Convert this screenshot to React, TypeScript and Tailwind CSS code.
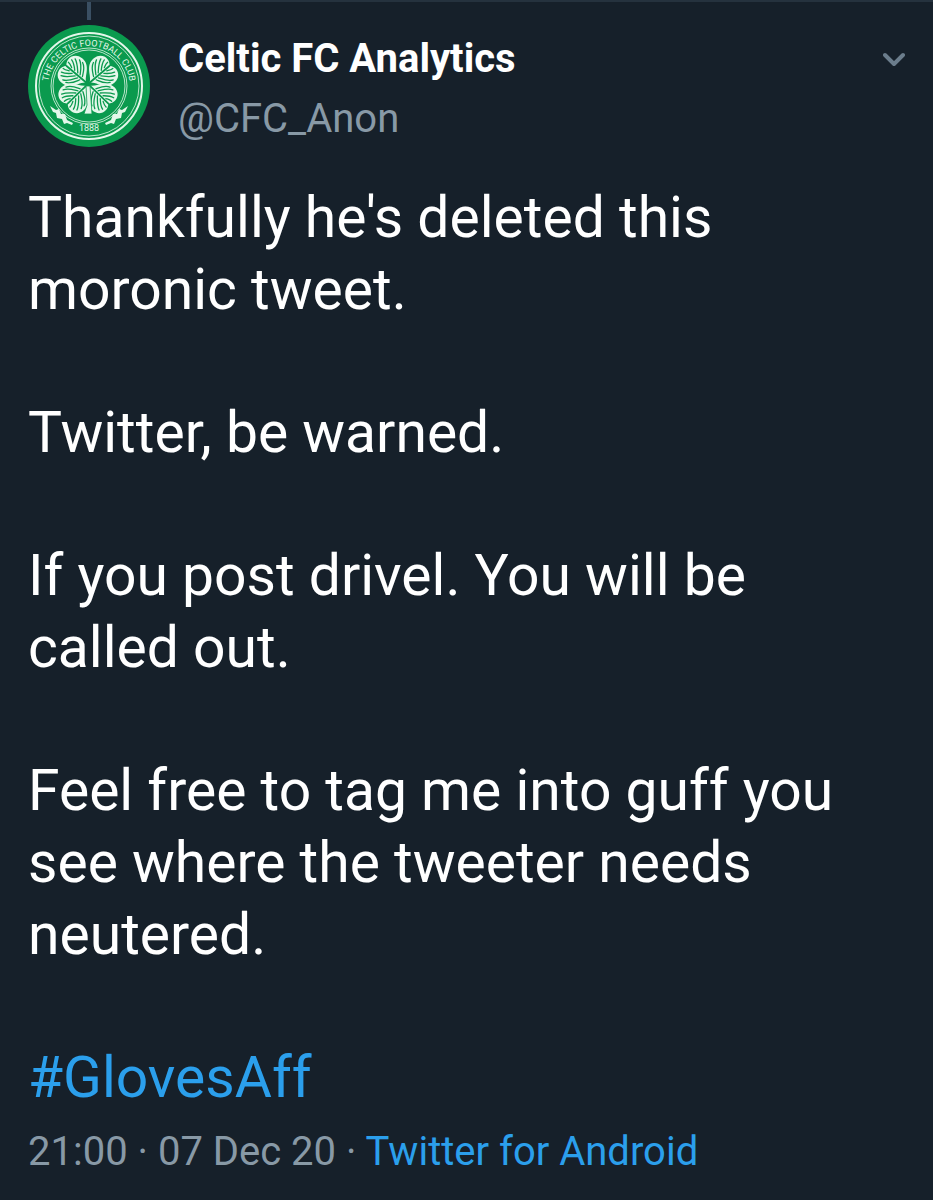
import React from 'react';
import { twMerge } from 'tailwind-merge';

const HEART = 'M0 -2 C-3 -8 -16 -9 -16 -21 C-16 -31 -5 -34 0 -28 C5 -34 16 -31 16 -21 C16 -9 3 -8 0 -2 Z';

const Leaf = ({ angle }: { angle: number }) => (
  <g transform={`translate(60 59) rotate(${angle})`}>
    <path d={HEART} fill="#e4f7ea" />
    <g fill="none" stroke="#0a9a4e" strokeLinecap="round">
      <path d="M0 -2 V-28" strokeWidth="1.8" />
      <path
        d="M-2 -9 C-6 -11 -11 -13 -13 -18 M-2 -12 C-5 -14 -11 -17 -13 -22 M-2 -15 C-5 -18 -9 -21 -11 -26 M-2 -19 C-4 -21 -7 -24 -8 -28 M-2 -23 C-3 -25 -4 -26 -4 -29 M2 -9 C6 -11 11 -13 13 -18 M2 -12 C5 -14 11 -17 13 -22 M2 -15 C5 -18 9 -21 11 -26 M2 -19 C4 -21 7 -24 8 -28 M2 -23 C3 -25 4 -26 4 -29"
        strokeWidth="1.3"
      />
    </g>
  </g>
);

const Scroll = ({ flip = false }: { flip?: boolean }) => (
  <path
    transform={flip ? 'matrix(-1 0 0 1 122 0)' : undefined}
    d="M22 81 L28 85 L31 84 L33 89 L37 89 L39 95 L45 98 L44 100 L39 98 L36 99 L34 94 L29 93 L28 88 L25 87 Z"
    fill="#e4f7ea"
  />
);

const Crest = () => (
  <svg viewBox="0 0 122 122" className="size-full" role="img" aria-label="Celtic FC Analytics">
    <defs>
      <path id="crest-arc" d="M20 62 A41 41 0 0 1 102 62" />
    </defs>
    <circle cx="61" cy="61" r="61" fill="#0a9a4e" />
    <g fill="none" stroke="#e4f7ea">
      <circle cx="61" cy="61" r="53" strokeWidth="2" />
      <circle cx="61" cy="61" r="50" strokeWidth="0.8" />
      <circle cx="61" cy="61" r="38" strokeWidth="0.8" />
      <circle cx="61" cy="61" r="36" strokeWidth="0.8" />
    </g>
    <text className="font-['Roboto',sans-serif] text-[9px]" fill="#e4f7ea">
      <textPath href="#crest-arc" startOffset="50%" textAnchor="middle">
        THE CELTIC FOOTBALL CLUB
      </textPath>
    </text>
    <text x="61" y="106" textAnchor="middle" className="font-['Roboto',sans-serif] text-[9px]" fill="#e4f7ea">
      1888
    </text>
    <Scroll />
    <Scroll flip />
    <Leaf angle={-50} />
    <Leaf angle={50} />
    <Leaf angle={134} />
    <Leaf angle={-134} />
    {/* Stem */}
    <path d="M58 61 H62 L64 89 H56 L59 80 Z" fill="#e4f7ea" stroke="#0a9a4e" strokeWidth="0.8" />
  </svg>
);

interface TweetTextProps {
  children: React.ReactNode;
  className?: string;
}

const TweetText: React.FC<TweetTextProps> = ({ children, className }) => (
  <p className={twMerge('text-[57px] leading-[72px]', className)}>{children}</p>
);

export default function App() {
  return (
    <article className="min-h-screen border-t-2 border-[#25323e] bg-[#16202a] px-7 pb-6 font-['Roboto',sans-serif] text-white">
      {/* Thread line */}
      <div className="flex h-[23px] w-[122px] justify-center">
        <div className="h-[18px] w-1 bg-[#3a4f63]" />
      </div>

      {/* Author */}
      <header className="flex items-start gap-7">
        <div className="size-[122px] shrink-0">
          <Crest />
        </div>
        <div className="min-w-0 flex-1 pt-1">
          <h1 className="text-[40px] leading-[60px] font-bold">Celtic FC Analytics</h1>
          <a href="#" className="block text-[40px] leading-[60px] text-[#8899a6]">
            @CFC_Anon
          </a>
        </div>
        <button type="button" aria-label="More options" className="mt-6 shrink-0">
          <svg viewBox="0 0 22 22" className="size-[22px]" fill="none" stroke="#6b7d8c" strokeWidth="4" strokeLinecap="round" strokeLinejoin="round">
            <path d="M2 6 L11 15 L20 6" />
          </svg>
        </button>
      </header>

      {/* Body */}
      <div className="flex flex-col gap-[71px] pt-[33px]">
        <TweetText>Thankfully he's deleted this moronic tweet.</TweetText>
        <TweetText>Twitter, be warned.</TweetText>
        <TweetText>If you post drivel. You will be called out.</TweetText>
        <TweetText>Feel free to tag me into guff you see where the tweeter needs neutered.</TweetText>
        <TweetText>
          <a href="#" className="text-[#2b9fec]">
            #GlovesAff
          </a>
        </TweetText>
      </div>

      {/* Date and source */}
      <footer className="pt-2 text-[40px] leading-[60px] text-[#8899a6]">
        <time dateTime="2020-12-07T21:00">21:00 · 07 Dec 20</time> ·{' '}
        <a href="#" className="text-[#2b9fec]">
          Twitter for Android
        </a>
      </footer>
    </article>
  );
}
